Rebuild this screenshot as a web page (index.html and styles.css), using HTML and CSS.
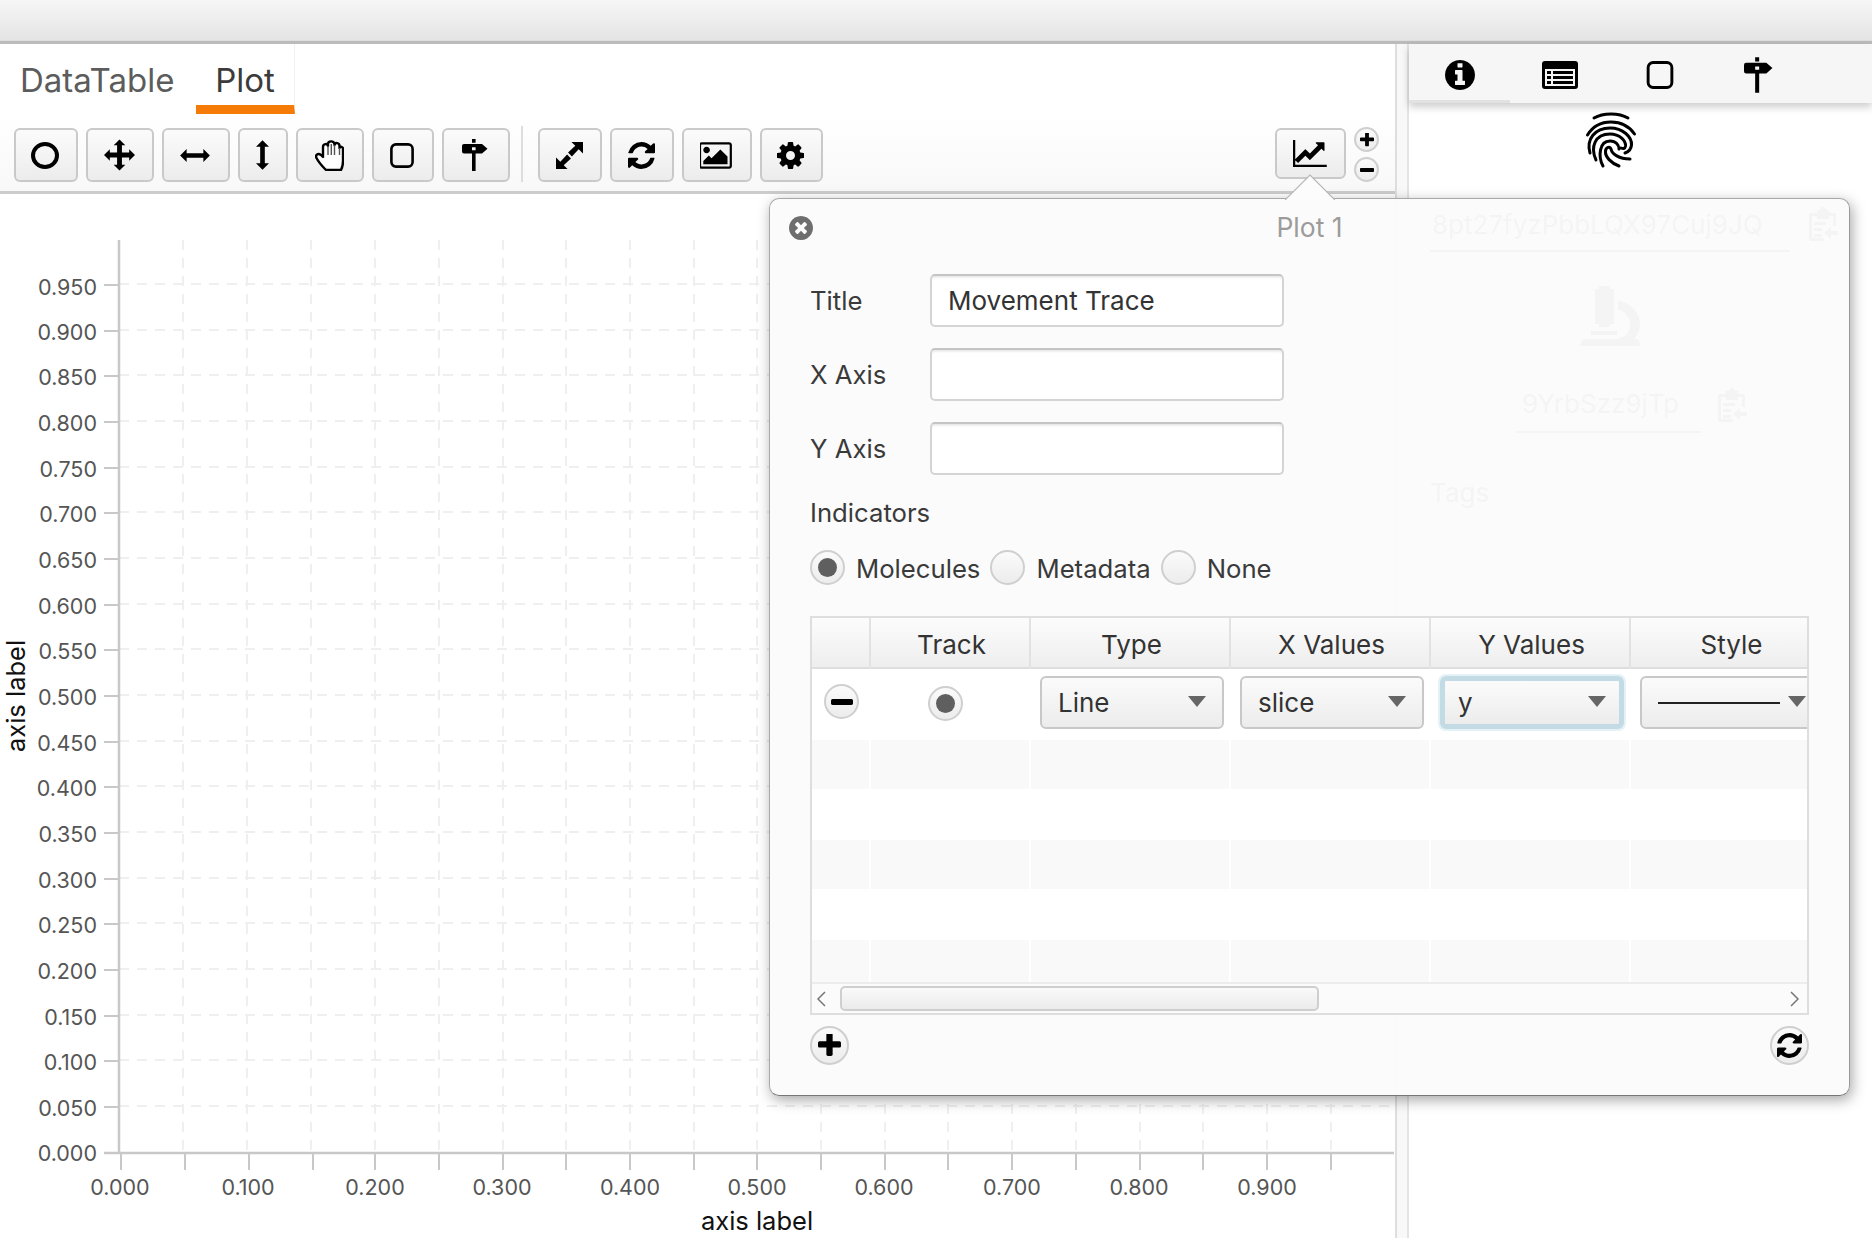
FILE: index.html
```html
<!doctype html>
<html>
<head>
<meta charset="utf-8">
<title>Plot</title>
<link rel="stylesheet" href="styles.css">
</head>

<body>
<svg class="defs">
	<symbol id="i-square" viewBox="0 0 24 25"><rect x="1.4" y="1.4" width="21.2" height="22.2" rx="4.5" fill="none" stroke="#000" stroke-width="2.6"/></symbol>
	<symbol id="i-sign" viewBox="0 0 26 32"><path d="M10 0h3.600v3.800H10zM2 5h18l5.500 4.800-5.500 4.800H13.600V32H10V14.600H2a2 2 0 0 1-2-2V7a2 2 0 0 1 2-2zM10 8.300v3h3.600v-3z" fill-rule="evenodd"/></symbol>
	<symbol id="i-refresh" viewBox="128 128 1536 1536"><path d="M1639 1056q0 5-1 7-64 268-268 434.5t-478 166.5q-146 0-282.5-55t-243.5-157l-129 129q-19 19-45 19t-45-19-19-45v-448q0-26 19-45t45-19h448q26 0 45 19t19 45-19 45l-137 137q71 66 161 102t187 36q134 0 250-65t186-179q11-17 53-117 8-23 30-23h192q13 0 22.5 9.5t9.5 22.5zm25-800v448q0 26-19 45t-45 19h-448q-26 0-45-19t-19-45 19-45l138-138q-148-137-349-137-134 0-250 65t-186 179q-11 17-53 117-8 23-30 23h-199q-13 0-22.5-9.5t-9.5-22.5v-7q65-268 270-434.5t480-166.5q146 0 284 55.5t245 156.5l130-129q19-19 45-19t45 19 19 45z"/></symbol>
	<symbol id="i-plus" viewBox="192 192 1408 1408"><path d="M1600 736v192q0 40-28 68t-68 28h-416v416q0 40-28 68t-68 28h-192q-40 0-68-28t-28-68v-416h-416q-40 0-68-28t-28-68v-192q0-40 28-68t68-28h416v-416q0-40 28-68t68-28h192q40 0 68 28t28 68v416h416q40 0 68 28t28 68z"/></symbol>
	<symbol id="i-minus" viewBox="192 640 1408 384"><path d="M1600 736v192q0 40-28 68t-68 28h-1216q-40 0-68-28t-28-68v-192q0-40 28-68t68-28h1216q40 0 68 28t28 68z"/></symbol>
	<symbol id="i-clip" viewBox="0 0 30 36"><path d="M9 4h3a3 3 0 0 1 6 0h3v3h5a2 2 0 0 1 2 2v11h-3v-10h-4v3h-12v-3h-5v22h12v3h-13a2 2 0 0 1-2-2v-24a2 2 0 0 1 2-2h6zM6 16h12v3h-12zM6 22h8v3h-8zM6 28h8v3h-8zM16 27l7-6v4h7v4h-7v4z"/></symbol>
</svg>

<div class="topbar"></div>

<div class="main">
	<div class="left">
		<div class="tabs">
			<div class="tab">DataTable</div>
			<div class="tab tab-on">Plot</div>
		</div>
		<div class="toolbar">
			<div class="btn w64"><svg class="ico" width="28" height="27" viewBox="0 0 28 27"><ellipse cx="14" cy="13.5" rx="12" ry="11.5" fill="none" stroke="#000" stroke-width="4"/></svg></div>
			<div class="btn w68"><svg class="ico" width="31" height="32" viewBox="0 0 32 32"><path d="M16 0l6 6h-3.5v7.5H26V10l6 6-6 6v-3.5h-7.5V26H22l-6 6-6-6h3.5v-7.5H6V22l-6-6 6-6v3.5h7.5V6H10z"/></svg></div>
			<div class="btn w68"><svg class="ico" width="32" height="13" viewBox="0 0 32 14"><path d="M0 7l7-7v4.5h18V0l7 7-7 7V9.500H7V14z"/></svg></div>
			<div class="btn w50"><svg class="ico" width="13" height="32" viewBox="0 0 14 32"><path d="M7 0l7 7H9.500v18H14l-7 7-7-7h4.500V7H0z"/></svg></div>
			<div class="btn w68"><svg class="ico" width="29" height="31" viewBox="0 0 29 31"><path d="M11 30C8 27 3 21 1.500 18C0 15 3 12.500 6 15L8 17V7C8 3.500 12.500 3 13 6V4C13 .5 19 .5 19.500 4V5C20 2 24.500 2.500 24.500 6V8C25 6 28 6.500 28 9V21C28 25 27 28 26 30Z" fill="#fff" stroke="#000" stroke-width="2.400" stroke-linejoin="round"/><path d="M13 6V15M16.300 4V15M19.500 5V15M24.500 8V15" stroke="#555" stroke-width="1.400" fill="none"/></svg></div>
			<div class="btn w62"><svg class="ico" width="24" height="25"><use href="#i-square"/></svg></div>
			<div class="btn w68"><svg class="ico" width="26" height="32"><use href="#i-sign"/></svg></div>
			<div class="sep"></div>
			<div class="btn w64"><svg class="ico" width="27" height="27" viewBox="0 0 28 28"><path d="M16 0h12v12l-4.500-4.500-7 7.500-4-4 7.500-7zM12 28H0V16l4.500 4.500 7-7.500 4 4-7.500 7z"/></svg></div>
			<div class="btn w64"><svg class="ico" width="27" height="27"><use href="#i-refresh"/></svg></div>
			<div class="btn w70"><svg class="ico" width="33" height="27" viewBox="0 128 1920 1536"><path d="M576 576q0 80-56 136t-136 56-136-56-56-136 56-136 136-56 136 56 56 136zm1024 384v448h-1408v-192l320-320 160 160 512-512zm96-704h-1600q-13 0-22.5 9.5t-9.5 22.5v1216q0 13 9.5 22.5t22.5 9.5h1600q13 0 22.5-9.5t9.5-22.5v-1216q0-13-9.5-22.5t-22.5-9.5zm160 32v1216q0 66-47 113t-113 47h-1600q-66 0-113-47t-47-113v-1216q0-66 47-113t113-47h1600q66 0 113 47t47 113z"/></svg></div>
			<div class="btn w63"><svg class="ico" width="27" height="27" viewBox="128 128 1536 1536"><path d="M1152 896q0-106-75-181t-181-75-181 75-75 181 75 181 181 75 181-75 75-181zm512-109v222q0 12-8 23t-20 13l-185 28q-19 54-39 91 35 50 107 138 10 12 10 25t-9 23q-27 37-99 108t-94 71q-12 0-26-9l-138-108q-44 23-91 38-16 136-29 186-7 28-36 28h-222q-14 0-24.5-8.5t-11.500-21.5l-28-184q-49-16-90-37l-141 107q-10 9-25 9-14 0-25-11-126-114-165-168-7-10-7-23 0-12 8-23 15-21 51-66.5t54-70.5q-27-50-41-99l-183-27q-13-2-21-12.5t-8-23.5v-222q0-12 8-23t19-13l186-28q14-46 39-92-40-57-107-138-10-12-10-24 0-10 9-23 26-36 98.5-107.5t94.5-71.5q13 0 26 10l138 107q44-23 91-38 16-136 29-186 7-28 36-28h222q14 0 24.5 8.5t11.500 21.5l28 184q49 16 90 37l142-107q9-9 24-9 13 0 25 10 129 119 165 170 7 8 7 22 0 12-8 23-15 21-51 66.5t-54 70.5q26 50 41 98l183 28q13 2 21 12.5t8 23.5z"/></svg></div>
			<div class="btn btn-chart"><svg class="ico" width="36" height="27" viewBox="0 128 2048 1536"><path d="M1920 1536v128h-1920v-1536h128v1408h1792zm-128-1248v435q0 21-19.5 29.5t-35.5-7.5l-121-121-633 633q-10 10-23 10t-23-10l-233-233-416 416-192-192 585-585q10-10 23-10t23 10l233 233 464-464-121-121q-16-16-7.5-35.5t29.5-19.5h435q14 0 23 9t9 23z"/></svg></div>
			<div class="zoomer">
				<div class="round r25"><svg width="14" height="14"><use href="#i-plus"/></svg></div>
				<div class="round r25"><svg width="14" height="4"><use href="#i-minus"/></svg></div>
			</div>
		</div>
		<svg class="chart" width="1394" height="1044" viewBox="0 194 1394 1044">
			<path class="grid" d="M119 284H1394M119 330H1394M119 375H1394M119 421H1394M119 467H1394M119 512H1394M119 558H1394M119 604H1394M119 649H1394M119 695H1394M119 741H1394M119 786H1394M119 832H1394M119 878H1394M119 923H1394M119 969H1394M119 1015H1394M119 1060H1394M119 1106H1394"/>
			<path class="grid" d="M183 240V1150M247 240V1150M311 240V1150M375 240V1150M439 240V1150M503 240V1150M566 240V1150M630 240V1150M694 240V1150M757 240V1150M821 240V1150M885 240V1150M948 240V1150M1012 240V1150M1076 240V1150M1140 240V1150M1203 240V1150M1267 240V1150M1331 240V1150"/>
			<path class="axis" d="M119 240V1153M104 1153H1394"/>
			<path class="tick" d="M104 285H118M104 331H118M104 376H118M104 422H118M104 468H118M104 513H118M104 559H118M104 605H118M104 650H118M104 696H118M104 742H118M104 787H118M104 833H118M104 879H118M104 924H118M104 970H118M104 1016H118M104 1061H118M104 1107H118"/>
			<path class="tick" d="M121 1154V1170M185 1154V1170M249 1154V1170M313 1154V1170M375 1154V1170M439 1154V1170M503 1154V1170M566 1154V1170M630 1154V1170M694 1154V1170M757 1154V1170M821 1154V1170M885 1154V1170M948 1154V1170M1012 1154V1170M1076 1154V1170M1140 1154V1170M1203 1154V1170M1267 1154V1170M1331 1154V1170"/>
			<g class="ylabels">
				<text x="97" y="294.500">0.950</text>
				<text x="97" y="340">0.900</text>
				<text x="97" y="385">0.850</text>
				<text x="97" y="431">0.800</text>
				<text x="97" y="477">0.750</text>
				<text x="97" y="522">0.700</text>
				<text x="97" y="568">0.650</text>
				<text x="97" y="614">0.600</text>
				<text x="97" y="659">0.550</text>
				<text x="97" y="705">0.500</text>
				<text x="97" y="751">0.450</text>
				<text x="97" y="796">0.400</text>
				<text x="97" y="842">0.350</text>
				<text x="97" y="888">0.300</text>
				<text x="97" y="933">0.250</text>
				<text x="97" y="979">0.200</text>
				<text x="97" y="1025">0.150</text>
				<text x="97" y="1070">0.100</text>
				<text x="97" y="1116">0.050</text>
				<text x="97" y="1161">0.000</text>
			</g>
			<g class="xlabels">
				<text x="120" y="1195">0.000</text>
				<text x="248" y="1195">0.100</text>
				<text x="375" y="1195">0.200</text>
				<text x="502" y="1195">0.300</text>
				<text x="630" y="1195">0.400</text>
				<text x="757" y="1195">0.500</text>
				<text x="884" y="1195">0.600</text>
				<text x="1012" y="1195">0.700</text>
				<text x="1139" y="1195">0.800</text>
				<text x="1267" y="1195">0.900</text>
			</g>
			<text class="axis-title" x="757" y="1230">axis label</text>
			<text class="axis-title" transform="translate(25 696) rotate(-90)">axis label</text>
		</svg>
	</div>

	<div class="divider"></div>

	<div class="right">
		<div class="side-tabs">
			<div class="side-tab side-tab-on"><svg width="30" height="30" viewBox="128 128 1536 1536"><path d="M1152 1376v-160q0-14-9-23t-23-9h-96v-512q0-14-9-23t-23-9h-320q-14 0-23 9t-9 23v160q0 14 9 23t23 9h96v320h-96q-14 0-23 9t-9 23v160q0 14 9 23t23 9h448q14 0 23-9t9-23zm-128-896v-160q0-14-9-23t-23-9h-192q-14 0-23 9t-9 23v160q0 14 9 23t23 9h192q14 0 23-9t9-23zm640 416q0 209-103 385.5t-279.5 279.5-385.5 103-385.5-103-279.5-279.5-103-385.5 103-385.5 279.5-279.5 385.5-103 385.5 103 279.5 279.5 103 385.5z"/></svg></div>
			<div class="side-tab"><svg width="36" height="28" viewBox="0 0 36 28"><path fill-rule="evenodd" d="M3 0h30a3 3 0 0 1 3 3v22a3 3 0 0 1-3 3H3a3 3 0 0 1-3-3V3a3 3 0 0 1 3-3zM3 8v17h30V8zM5 10h4v3H5zM11 10h20v3H11zM5 15h4v3H5zM11 15h20v3H11zM5 20h4v3H5zM11 20h20v3H11z"/></svg></div>
			<div class="side-tab"><svg width="28" height="28"><use href="#i-square"/></svg></div>
			<div class="side-tab side-tab-sign"><svg width="29" height="36"><use href="#i-sign"/></svg></div>
		</div>
		<div class="info">
			<svg class="finger" width="70" height="70" viewBox="0 0 70 70" fill="none" stroke="#000" stroke-width="3" stroke-linecap="round">
				<path d="M19 13C28 7.500 44 7.500 53 13"/>
				<path d="M12.500 30C18 21 26 17 36 17C46 17 54 21 59.500 29"/>
				<path d="M15 48C11 34 20 23 35 23C48 23 57 32 56.500 40C56 45 53 47 50 48"/>
				<path d="M21 55C15 42 20 29 35 29C45 29 51 36 50.500 41C50 44 48 44 46 43"/>
				<path d="M28 61C23 52 24 36 35 36C41 36 44 40 44 44"/>
				<path d="M44 61C36 58 30 52 30.500 46C31 42 35 41 36 44C37 49 44 54 55 54"/>
			</svg>
			<div class="id-row">
				<div class="id-field">8pt27fyzPbbLQX97Cuj9JQ</div>
				<svg class="clip" width="30" height="36"><use href="#i-clip"/></svg>
			</div>
			<svg class="scope" width="60" height="60" viewBox="0 0 60 60"><path d="M19 0h11v3h4v35h-4v3h-11v-3h-4v-35h4zM11 45h26v4H11zM38 15C50 16 60 26 60 38C60 44 58 49 54 53H57C59 53 60 56 60 60H0C0 56 2 53 6 53H36C45 52 50 46 50 38C50 31 45 25 38 24Z"/></svg>
			<div class="id-row id-short">
				<div class="id-field">9YrbSzz9jTp</div>
				<svg class="clip" width="30" height="36"><use href="#i-clip"/></svg>
			</div>
			<div class="tags">Tags</div>
		</div>
	</div>
</div>

<div class="popover">
	<svg class="pop-arrow" width="50" height="26" viewBox="0 0 50 26"><path d="M0 26L25 1L50 26" fill="#fcfcfc" stroke="#b4b4b4" stroke-width="1.200"/></svg>
	<div class="pop-head">
		<svg class="pop-close" width="24" height="24" viewBox="128 128 1536 1536"><path fill="#6e6e6e" d="M1277 1122q0-26-19-45l-181-181 181-181q19-19 19-45 0-27-19-46l-90-90q-19-19-46-19-26 0-45 19l-181 181-181-181q-19-19-45-19-27 0-46 19l-90 90q-19 19-19 46 0 26 19 45l181 181-181 181q-19 19-19 45 0 27 19 46l90 90q19 19 46 19 26 0 45-19l181-181 181 181q19 19 45 19 27 0 46-19l90-90q19-19 19-46zm387-226q0 209-103 385.500t-279.500 279.500-385.500 103-385.500-103-279.500-279.500-103-385.500 103-385.500 279.500-279.500 385.500-103 385.500 103 279.500 279.500 103 385.500z"/></svg>
		<div class="pop-title">Plot 1</div>
	</div>
	<div class="pop-body">
		<div class="form">
			<label class="lbl">Title</label><div class="field">Movement Trace</div>
			<label class="lbl">X Axis</label><div class="field"></div>
			<label class="lbl">Y Axis</label><div class="field"></div>
		</div>
		<div class="lbl indicators">Indicators</div>
		<div class="radios">
			<div class="radio radio-on"></div><span class="lbl">Molecules</span>
			<div class="radio"></div><span class="lbl">Metadata</span>
			<div class="radio"></div><span class="lbl">None</span>
		</div>
		<div class="table">
			<div class="row row-head">
				<div class="cell"></div>
				<div class="cell">Track</div>
				<div class="cell">Type</div>
				<div class="cell">X Values</div>
				<div class="cell">Y Values</div>
				<div class="cell">Style</div>
			</div>
			<div class="row row-first">
				<div class="cell"><div class="round r35 minus"><svg width="24" height="6"><use href="#i-minus"/></svg></div></div>
				<div class="cell"><div class="radio radio-on track-radio"></div></div>
				<div class="cell"><div class="combo"><span>Line</span><i class="caret"></i></div></div>
				<div class="cell"><div class="combo"><span>slice</span><i class="caret"></i></div></div>
				<div class="cell"><div class="combo combo-focus"><span>y</span><i class="caret"></i></div></div>
				<div class="cell"><div class="combo"><span class="stroke"></span><i class="caret"></i></div></div>
			</div>
			<div class="row row-odd"><div class="cell"></div><div class="cell"></div><div class="cell"></div><div class="cell"></div><div class="cell"></div><div class="cell"></div></div>
			<div class="row row-even"><div class="cell"></div><div class="cell"></div><div class="cell"></div><div class="cell"></div><div class="cell"></div><div class="cell"></div></div>
			<div class="row row-odd"><div class="cell"></div><div class="cell"></div><div class="cell"></div><div class="cell"></div><div class="cell"></div><div class="cell"></div></div>
			<div class="row row-even"><div class="cell"></div><div class="cell"></div><div class="cell"></div><div class="cell"></div><div class="cell"></div><div class="cell"></div></div>
			<div class="row row-last"><div class="cell"></div><div class="cell"></div><div class="cell"></div><div class="cell"></div><div class="cell"></div><div class="cell"></div></div>
			<div class="hscroll">
				<svg width="11" height="16" viewBox="0 0 11 16"><path d="M9 1L2 8l7 7" fill="none" stroke="#777" stroke-width="1.500"/></svg>
				<div class="thumb"></div>
				<svg class="next" width="11" height="16" viewBox="0 0 11 16"><path d="M2 1l7 7-7 7" fill="none" stroke="#777" stroke-width="1.500"/></svg>
			</div>
		</div>
		<div class="pop-foot">
			<div class="round r39"><svg width="23" height="23"><use href="#i-plus"/></svg></div>
			<div class="round r39"><svg width="25" height="25"><use href="#i-refresh"/></svg></div>
		</div>
	</div>
</div>
</body>
</html>
```

FILE: styles.css
```css
*{margin:0; padding:0; box-sizing:border-box;}
body{width:1872px; height:1238px; overflow:hidden; background:#fff; position:relative; font-family:"Inter","Roboto","Liberation Sans",sans-serif; color:#333;}
.defs{display:none;}

.topbar{height:44px; background:linear-gradient(#f6f6f6,#e4e4e4); border-bottom:3px solid #bbb; box-shadow:inset 0 -1px 0 #ddd;}
.main{display:flex; height:1194px;}
.left{width:1395px; flex:none; overflow:hidden;}
.divider{width:14px; flex:none; border-left:2px solid #dedede; border-right:2px solid #e4e4e4; background:#f8f8f8;}
.right{flex:1;}

/* tabs */
.tabs{display:flex; height:70px; padding-left:20px; background:#fff;}
.tab{font-size:33px; line-height:61px; padding-top:6px; color:#5c5c5c; width:176px;}
.tab-on{width:99px; color:#3b3b3b; text-align:center; border-bottom:9px solid #f57a06; border-right:1px solid #f2f2f2;}

/* toolbar */
.toolbar{display:flex; align-items:flex-start; gap:8px; height:80px; padding:14px 15px 0 14px; background:linear-gradient(#fff,#f8f8f8); border-bottom:3px solid #ccc;}
.btn{height:54px; flex:none; display:flex; align-items:center; justify-content:center; padding-right:2px; border:2px solid #c9c9c9; border-radius:6px; background:linear-gradient(#fbfbfb,#ececec);}
.w50{width:50px;}
.w62{width:62px;}
.w63{width:63px;}
.w64{width:64px;}
.w68{width:68px;}
.w70{width:70px;}
.sep{width:2px; height:56px; margin:-2px 7px 0 3px; background:#ddd;}
.btn-chart{width:71px; height:51px; margin-left:auto; padding-right:0;}
.zoomer{display:flex; flex-direction:column; gap:5px; margin:-1px 1px 0 0;}
.round{flex:none; display:flex; align-items:center; justify-content:center; border:2px solid #cfcfcf; border-radius:50%; background:linear-gradient(#fbfbfb,#ececec);}
.r25{width:25px; height:25px;}
.r35{width:35px; height:35px;}
.r39{width:39px; height:39px;}

/* chart */
.chart{display:block;}
.grid{fill:none; stroke:#efefef; stroke-width:2; stroke-dasharray:10 8;}
.axis{fill:none; stroke:#c8c8c8; stroke-width:2.500;}
.tick{fill:none; stroke:#c8c8c8; stroke-width:2;}
.ylabels text{font-size:21.500px; fill:#555; text-anchor:end;}
.xlabels text{font-size:21.500px; fill:#555; text-anchor:middle;}
.axis-title{font-size:25.500px; fill:#111; text-anchor:middle;}

/* right side */
.side-tabs{display:flex; height:59px; background:#f6f6f6; box-shadow:0 4px 8px rgba(0,0,0,.2);}
.side-tab{width:100px; display:flex; align-items:center; justify-content:center; padding-top:3px;}
.side-tab-on{width:101px; border-bottom:3px solid #e2e2e2; padding-top:6px;}
.side-tab-sign{padding-right:3px;}
.info{width:408px; margin-left:21px; display:flex; flex-direction:column; align-items:flex-start;}
.finger{margin:2px 0 0 145px;}
.id-row{display:flex; align-items:center; gap:18px; margin-top:30px; height:47px; font-size:26px; color:#333;}
.id-field{width:360px; height:47px; line-height:40px; padding-left:2px; border-bottom:2px solid #333;}
.clip{fill:#333; margin-top:-9px;}
.scope{margin:34px 0 0 150px; fill:#333;}
.id-short{margin:40px 0 0 86px; gap:16px;}
.id-short .id-field{width:185px; padding-left:6px; line-height:36px;}
.tags{margin-top:44px; font-size:26px; color:#333;}

/* popover */
.popover{position:absolute; left:769px; top:198px; width:1081px; height:898px; border:1px solid #a8a8a8; border-bottom-color:#777; border-right-color:#999; border-radius:10px; background:rgba(251,251,251,.97); box-shadow:2px 4px 14px rgba(0,0,0,.35);}
.pop-arrow{position:absolute; left:515px; top:-25px; display:block;}
.pop-head{display:grid; grid-template-columns:1fr auto 1fr; align-items:center; height:58px; padding-left:19px;}
.pop-close{grid-column:1; justify-self:start;}
.pop-title{grid-column:2; font-size:26.500px; color:#9b9b9b; margin:-2px 0 0 -19px;}
.pop-body{padding:17px 40px 0;}
.form{display:grid; grid-template-columns:120px 354px; grid-auto-rows:53px; row-gap:21px; align-items:center;}
.lbl{font-size:25.700px; color:#3a3a3a;}
.field{height:53px; line-height:49px; padding-left:16px; font-size:26px; color:#333; background:#fff; border:2px solid #d4d4d4; border-top-color:#c4c4c4; border-radius:5px; box-shadow:inset 0 3px 3px -2px #ddd;}
.indicators{height:36px; line-height:36px; margin-top:20px;}
.radios{display:flex; align-items:center; margin-top:19px; height:35px;}
.radio{width:35px; height:35px; flex:none; border:2px solid #cfcfcf; border-radius:50%; background:linear-gradient(#fbfbfb,#ececec); margin-right:11px; display:flex; align-items:center; justify-content:center;}
.radio-on::after{content:""; width:19px; height:19px; border-radius:50%; background:#5f5f5f;}
.radios .lbl{margin-right:10px; padding-top:2px;}

/* table */
.table{height:399px; margin-top:31px; border:2px solid #dedede; overflow:hidden; background:#fff;}
.row{display:grid; grid-template-columns:59px 160px 200px 200px 200px 200px;}
.cell{overflow:visible;}
.row-head{height:51px; border-bottom:2px solid #dedede; background:linear-gradient(#fcfcfc,#eeeeee);}
.row-head .cell{font-size:26px; line-height:49px; padding:2px 0 0 3px; text-align:center; color:#333; border-right:2px solid #e2e2e2;}
.row-first{height:71px;}
.row-first .cell{padding:7px 0 0 9px;}
.row-odd{height:49px;}
.row-even{height:51px;}
.row-last{height:42px;}
.row-odd .cell,.row-last .cell{background:#f9f9f9; border-right:2px solid #fff;}
.row-first .cell:first-child{padding:15px 0 0 12px;}
.row-first .cell:nth-child(2){padding:17px 0 0 57px;}
.track-radio{margin:0;}
.combo{width:184px; height:53px; display:flex; align-items:center; justify-content:space-between; padding:0 16px; border:2px solid #c8c8c8; border-radius:6px; background:linear-gradient(#fbfbfb,#ececec); font-size:26px; color:#333;}
.combo-focus{border:5px solid #c3dbe5; padding:0 13px; box-shadow:0 0 0 2px #e4f2f8;}
.caret{width:0; height:0; border-left:9px solid transparent; border-right:9px solid transparent; border-top:11px solid #666; margin-top:-3px;}
.stroke{width:122px; height:2px; background:#222;}
.hscroll{height:31px; display:flex; align-items:center; padding:0 7px 0 4px; background:#fbfbfb; border-top:2px solid #ececec;}
.thumb{width:479px; height:25px; margin-left:13px; border:2px solid #cfcfcf; border-radius:5px; background:linear-gradient(#fafafa,#ebebeb);}
.next{margin-left:auto;}
.pop-foot{display:flex; justify-content:space-between; margin-top:11px;}
```
